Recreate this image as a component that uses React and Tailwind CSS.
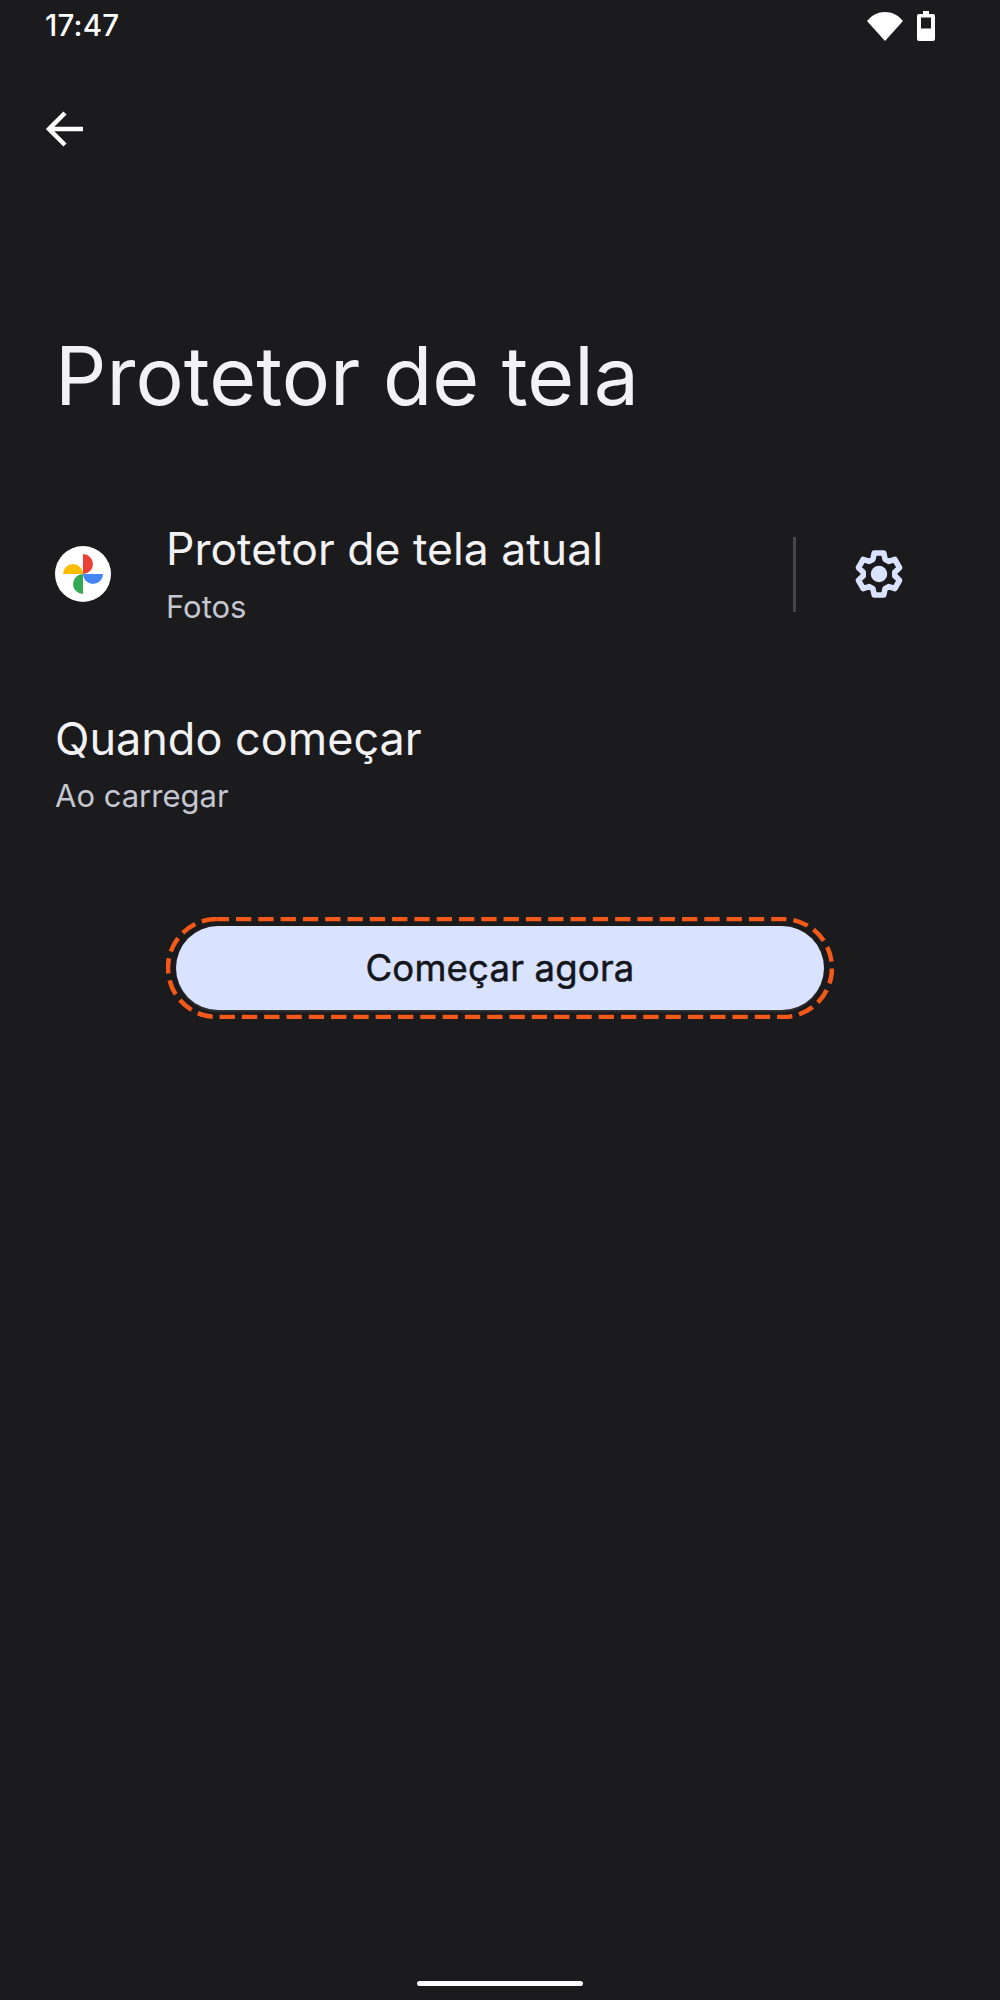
export default function App() {
  return (
    <div className="relative flex h-[2000px] w-[1000px] flex-col overflow-hidden bg-[#1b1b1d] font-['Inter','Roboto',sans-serif]">
      <div className="flex h-[52px] items-center justify-between pl-[45px] pr-[65px]">
        <span className="text-[29.5px] font-medium leading-none tracking-[0.2px] text-white">17:47</span>
        <div className="flex items-center gap-[14px]">
          <svg width="36" height="30" viewBox="0 0 36 30"><path d="M0 10C5 4 11 1 18 1s13 3 18 9L18 30z" fill="#fff" /></svg>
          <svg width="18" height="30" viewBox="0 0 18 30"><path fillRule="evenodd" d="M6 0h6v3h4a2 2 0 0 1 2 2v23a2 2 0 0 1-2 2H2a2 2 0 0 1-2-2V5a2 2 0 0 1 2-2h4zM4 6.500v11h10v-11z" fill="#fff" /></svg>
        </div>
      </div>
      <div className="mt-[58px] pl-[45px]">
        <svg width="38" height="38" viewBox="0 0 38 38" fill="none" stroke="#fff" strokeWidth="4.500"><path d="M38 19H4M20 3 4 19l16 16" /></svg>
      </div>
      <h1 className="mt-[178px] pl-[55px] text-[80.500px] font-normal leading-[100px] text-[#f2f2f4]">Protetor de tela</h1>
      <div className="mt-[93px] flex h-[110px] items-center pl-[55px]">
        <div className="flex h-[56px] w-[56px] items-center justify-center rounded-full bg-white">
          <svg width="42" height="42" viewBox="0 0 42 42">
            <path d="M21 21V1a10 10 0 0 1 0 20z" fill="#ea4335" />
            <path d="M21 21h20a10 10 0 0 1-20 0z" fill="#4285f4" />
            <path d="M21 21v20a10 10 0 0 1 0-20z" fill="#34a853" />
            <path d="M21 21H1a10 10 0 0 1 20 0z" fill="#fbbc04" />
          </svg>
        </div>
        <div className="ml-[55px] mb-[2px] flex w-[627px] flex-col">
          <span className="text-[44.500px] leading-[56px] text-[#f2f2f4]">Protetor de tela atual</span>
          <span className="mt-[11px] text-[31px] leading-[38px] text-[#c4c6d0]">Fotos</span>
        </div>
        <div className="h-[75px] w-[3px] bg-[#47474a]" />
        <svg className="ml-[57px]" width="52" height="52" viewBox="0 0 24 24" fill="none" stroke="#d9e2ff" strokeWidth="2.600" strokeLinejoin="round">
          <path d="M9.800 2.300h4.400l.6 2.900 1.700 1 2.800-.9 2.200 3.800-2.200 2v1.800l2.200 2-2.200 3.800-2.800-.9-1.700 1-.6 2.900H9.800l-.6-2.900-1.700-1-2.800.9-2.200-3.800 2.200-2v-1.800l-2.200-2 2.200-3.800 2.800.9 1.700-1z" />
          <circle cx="12" cy="12" r="3.800" fill="#d9e2ff" stroke="none" />
        </svg>
      </div>
      <div className="mt-[82px] flex flex-col pl-[55px]">
        <span className="text-[45px] leading-[56px] text-[#f2f2f4]">Quando começar</span>
        <span className="mt-[10px] text-[31px] leading-[38px] text-[#c4c6d0]">Ao carregar</span>
      </div>
      <div className="relative mx-auto mt-[111px] flex h-[84px] w-[648px] items-center justify-center rounded-full bg-[#d9e2ff] shadow-[0_3px_2px_-1px_#323237]">
        <span className="text-[36.500px] font-normal tracking-[0.2px] text-[#14161c] [-webkit-text-stroke:0.5px_#14161c]">Começar agora</span>
        <svg className="absolute left-[-10px] top-[-9px]" width="668" height="102" viewBox="0 0 668 102" fill="none">
          <rect x="2" y="2" width="664" height="98" rx="49" stroke="#f4591a" strokeWidth="4.500" strokeDasharray="15.300 7" strokeDashoffset="3.300" />
        </svg>
      </div>
      <div className="absolute bottom-[14px] left-[417px] h-[5px] w-[166px] rounded-full bg-white" />
    </div>
  );
}
